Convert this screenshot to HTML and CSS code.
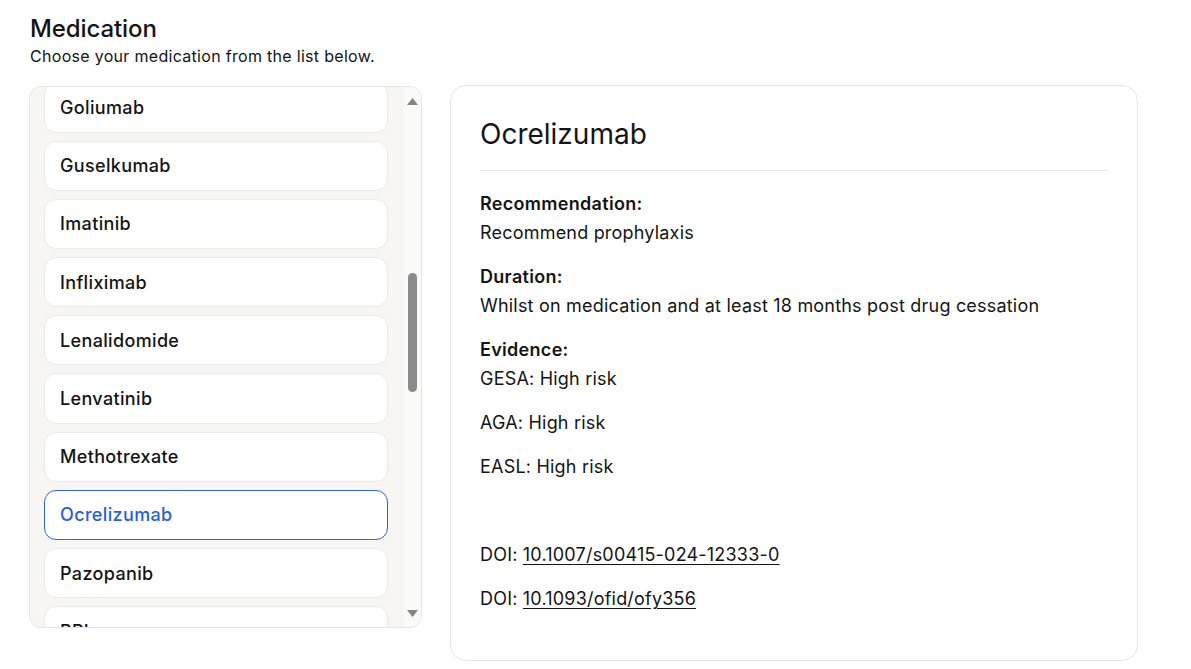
FILE: index.html
```html
<!DOCTYPE html>
<html lang="en">
<head>
<meta charset="utf-8">
<title>Medication</title>
<link rel="stylesheet" href="styles.css">
</head>
<body>
<header class="page-head">
  <h1 class="page-title">Medication</h1>
  <p class="page-sub">Choose your medication from the list below.</p>
</header>
<main class="layout">
  <div class="list-box">
    <ul class="med-list" id="medList">
      <li class="med-item">Abatacept</li>
      <li class="med-item">Adalimumab</li>
      <li class="med-item">Alemtuzumab</li>
      <li class="med-item">Anakinra</li>
      <li class="med-item">Azathioprine</li>
      <li class="med-item">Baricitinib</li>
      <li class="med-item">Bortezomib</li>
      <li class="med-item">Certolizumab</li>
      <li class="med-item">Cyclophosphamide</li>
      <li class="med-item">Dasatinib</li>
      <li class="med-item">Etanercept</li>
      <li class="med-item">Everolimus</li>
      <li class="med-item">Fingolimod</li>
      <li class="med-item" data-anchor="1">Goliumab</li>
      <li class="med-item">Guselkumab</li>
      <li class="med-item">Imatinib</li>
      <li class="med-item">Infliximab</li>
      <li class="med-item">Lenalidomide</li>
      <li class="med-item">Lenvatinib</li>
      <li class="med-item">Methotrexate</li>
      <li class="med-item is-selected">Ocrelizumab</li>
      <li class="med-item">Pazopanib</li>
      <li class="med-item">PPIs</li>
      <li class="med-item">Prednisolone</li>
      <li class="med-item">Rituximab</li>
      <li class="med-item">Ruxolitinib</li>
      <li class="med-item">Sarilumab</li>
      <li class="med-item">Secukinumab</li>
      <li class="med-item">Sorafenib</li>
      <li class="med-item">Sunitinib</li>
      <li class="med-item">Tacrolimus</li>
      <li class="med-item">Thalidomide</li>
      <li class="med-item">Tocilizumab</li>
      <li class="med-item">Tofacitinib</li>
      <li class="med-item">Upadacitinib</li>
      <li class="med-item">Ustekinumab</li>
      <li class="med-item">Vedolizumab</li>
      <li class="med-item">Venetoclax</li>
      <li class="med-item">Vinblastine</li>
      <li class="med-item">Vincristine</li>
    </ul>
    <div class="scroll-track" aria-hidden="true">
      <svg class="scroll-arrow" width="11" height="7" viewBox="0 0 11 7"><path d="M5.5 0 L11 7 L0 7 Z" fill="#858585"/></svg>
      <div class="scroll-thumb"></div>
      <div class="scroll-spacer"></div>
      <svg class="scroll-arrow" width="11" height="7" viewBox="0 0 11 7"><path d="M0 0 L11 0 L5.5 7 Z" fill="#858585"/></svg>
    </div>
  </div>
  <section class="detail">
    <h2 class="detail-title">Ocrelizumab</h2>
    <div class="detail-body">
      <div class="field">
        <div class="field-label">Recommendation:</div>
        <div class="field-value">Recommend prophylaxis</div>
      </div>
      <div class="field">
        <div class="field-label">Duration:</div>
        <div class="field-value">Whilst on medication and at least 18 months post drug cessation</div>
      </div>
      <div class="field">
        <div class="field-label">Evidence:</div>
        <p class="evidence">GESA: High risk</p>
        <p class="evidence">AGA: High risk</p>
        <p class="evidence">EASL: High risk</p>
        <p class="evidence empty"></p>
        <p class="evidence">DOI: <a class="doi" href="#">10.1007/s00415-024-12333-0</a></p>
        <p class="evidence">DOI: <a class="doi" href="#">10.1093/ofid/ofy356</a></p>
      </div>
    </div>
  </section>
</main>
<script src="script.js"></script>
</body>
</html>
```

FILE: styles.css
```css
* { box-sizing: border-box; }

html, body {
  margin: 0;
  background: #ffffff;
}

body {
  font-family: Inter, "Noto Sans", "Liberation Sans", sans-serif;
  color: #141414;
  padding: 13px 29px 0 29px;
}

.page-head { margin: 0; }

.page-title {
  margin: 0 0 0 1px;
  font-size: 24px;
  line-height: 32px;
  font-weight: 500;
  letter-spacing: -0.1px;
}

.page-sub {
  margin: 0 0 0 1px;
  font-size: 16px;
  line-height: 22px;
  letter-spacing: 0.3px;
}

.layout {
  display: flex;
  align-items: flex-start;
  gap: 28px;
  margin-top: 18px;
}

/* list box with custom scrollbar column */
.list-box {
  flex: none;
  width: 393px;
  height: 542px;
  margin-top: 1px;
  display: flex;
  border: 1px solid #e6e5e2;
  border-radius: 12px;
  overflow: hidden;
  background: #f7f6f3;
}

.med-list {
  position: relative;
  list-style: none;
  margin: 0;
  flex: 1;
  min-width: 0;
  overflow-y: scroll;
  scrollbar-width: none;
  padding: 14px 16px 14px 14px;
  display: flex;
  flex-direction: column;
  gap: 8px;
}

.med-list::-webkit-scrollbar { display: none; }

.scroll-track {
  flex: none;
  width: 17px;
  background: #fafaf9;
  display: flex;
  flex-direction: column;
  align-items: center;
  padding: 11px 0 10px 0;
}

.scroll-arrow {
  display: block;
  flex: none;
}

.scroll-thumb {
  flex: none;
  width: 9px;
  height: 119px;
  margin-top: 168px;
  margin-left: -1px;
  border-radius: 5px;
  background: #8a8a8a;
}

.scroll-spacer { flex: 1; }

.med-item {
  flex: none;
  height: 50.2px;
  padding: 0 15px;
  display: flex;
  align-items: center;
  background: #ffffff;
  border: 1px solid #ebe9e5;
  border-radius: 12px;
  font-size: 18px;
  font-weight: 500;
  letter-spacing: 0.35px;
  color: #141414;
  white-space: nowrap;
}

.med-item.is-selected {
  border-color: #2b66ea;
  color: #1f5cf0;
}

/* detail card */
.detail {
  width: 688px;
  flex: none;
  border: 1px solid #e6e6e6;
  border-radius: 16px;
  background: #ffffff;
  padding: 30px 29px 31px 29px;
}

.detail-title {
  margin: 0;
  font-size: 28px;
  line-height: 36px;
  font-weight: 400;
  padding-bottom: 18px;
  border-bottom: 1px solid #e8e8e8;
}

.detail-body {
  padding-top: 19px;
}

.field { margin-bottom: 16px; }

.field-label {
  font-size: 18px;
  line-height: 28px;
  font-weight: 600;
  letter-spacing: 0.3px;
}

.field-value {
  font-size: 18px;
  line-height: 29px;
  letter-spacing: 0.2px;
}

.evidence {
  margin: 0 0 16px 0;
  font-size: 18px;
  line-height: 28px;
  min-height: 28px;
  letter-spacing: 0.2px;
}

.field-label + .evidence { margin-top: 1px; }

.doi {
  color: #141414;
  text-decoration: underline;
  text-underline-offset: 3px;
}
```

FILE: script.js
```js
(function () {
  var list = document.getElementById('medList');
  var anchor = list ? list.querySelector('[data-anchor]') : null;
  if (list && anchor) {
    list.scrollTop = anchor.offsetTop + 5;
  }
})();
```
